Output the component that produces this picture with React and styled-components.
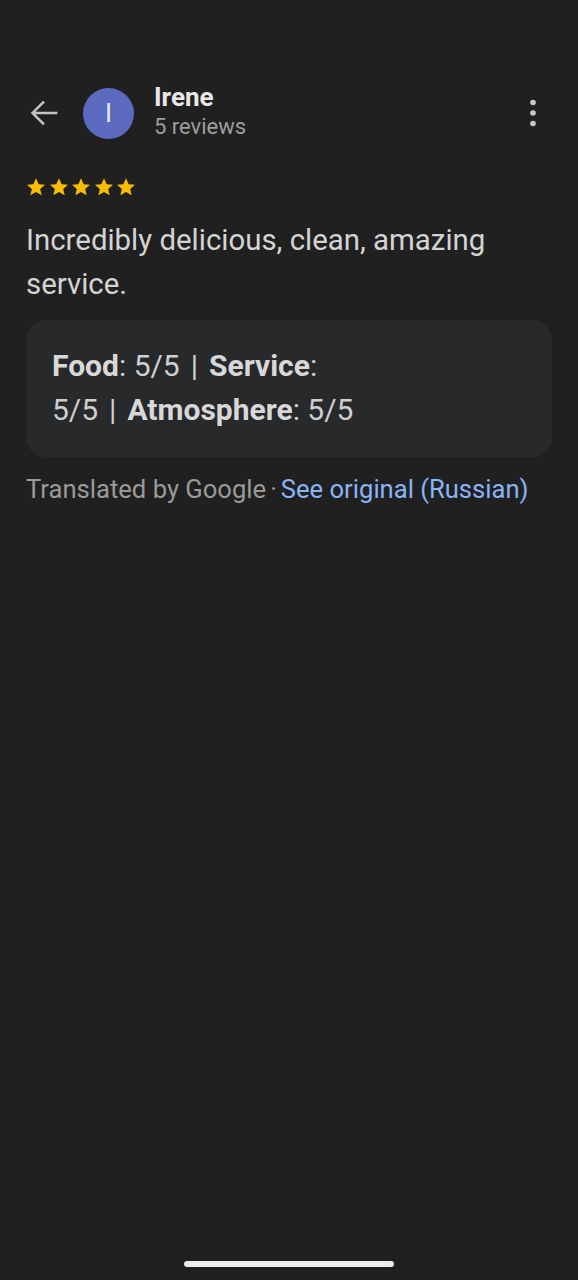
import React from 'react';
import styled, { createGlobalStyle } from 'styled-components';

const GlobalStyle = createGlobalStyle`
  html, body {
    margin: 0;
    background: #202020;
  }
  body {
    font-family: Roboto, "Noto Sans", sans-serif;
  }
`;

const Screen = styled.div`
  width: 578px;
  height: 1280px;
  background: #202020;
  display: flex;
  flex-direction: column;
  box-sizing: border-box;
  padding-top: 86px;
`;

const Header = styled.div`
  display: flex;
  align-items: center;
  padding: 0 35px 0 24px;
  height: 54px;
`;

const IconButton = styled.button`
  background: none;
  border: none;
  padding: 0;
  margin: 0;
  width: ${(p) => p.size || 40}px;
  height: 40px;
  display: flex;
  align-items: center;
  justify-content: center;
  cursor: pointer;
`;

const Avatar = styled.div`
  width: 51px;
  height: 51px;
  border-radius: 50%;
  background: #5c6bc0;
  color: #e8eaf6;
  display: flex;
  align-items: center;
  justify-content: center;
  font-size: 26px;
  margin-left: 19px;
`;

const Who = styled.div`
  display: flex;
  flex-direction: column;
  align-self: flex-start;
  margin: -2px 0 0 20px;
  flex: 1;
`;

const Name = styled.div`
  color: #e8e8e8;
  font-size: 26px;
  font-weight: 700;
  line-height: 26px;
`;

const Count = styled.div`
  color: #9e9e9e;
  font-size: 22px;
  line-height: 34px;
`;

const Body = styled.div`
  padding: 0 26px;
  display: flex;
  flex-direction: column;
`;

const Stars = styled.div`
  display: flex;
  gap: 2.5px;
  margin-top: 37px;
`;

const ReviewText = styled.p`
  margin: 21px 0 0;
  color: #d4d4d4;
  font-size: 29.4px;
  line-height: 44px;
`;

const Card = styled.div`
  margin-top: 14px;
  background: #28292b;
  border-radius: 20px;
  padding: 24px 26px 25px;
  color: #cfcfcf;
  font-size: 30px;
  line-height: 44px;
  b {
    font-weight: 700;
    color: #d8d8d8;
  }
`;

const Sep = styled.span`
  margin: 0 11px;
`;

const Footer = styled.div`
  margin-top: 14px;
  font-size: 25.6px;
  line-height: 36px;
  color: #9a9a9a;
  white-space: nowrap;
`;

const Dot = styled.span`
  margin: 0 4px;
`;

const Link = styled.a`
  color: #8ab4f8;
  text-decoration: none;
`;

const Spacer = styled.div`
  flex: 1;
`;

const HomeBar = styled.div`
  align-self: center;
  width: 210px;
  height: 6px;
  border-radius: 3px;
  background: #ececec;
  margin-bottom: 13px;
`;

function Star() {
  return (
    <svg width="20" height="20" viewBox="0 0 24 24">
      <path
        fill="#fbbc04"
        d="M12 1.5l3.2 7.1 7.6.7-5.8 5.1 1.8 7.6L12 18l-6.8 4 1.8-7.6-5.8-5.1 7.6-.7z"
      />
    </svg>
  );
}

export default function App() {
  return (
    <>
      <GlobalStyle />
      <Screen>
        <Header>
          <IconButton size={40}>
            <svg width="40" height="40" viewBox="0 0 24 24">
              <path
                fill="#c4c4c4"
                d="M20 11.25H6.9l5.6-5.6L11.45 4.6 4.05 12l7.4 7.4 1.05-1.05-5.6-5.6H20z"
              />
            </svg>
          </IconButton>
          <Avatar>I</Avatar>
          <Who>
            <Name>Irene</Name>
            <Count>5 reviews</Count>
          </Who>
          <IconButton size={20}>
            <svg width="8" height="28" viewBox="0 0 8 28">
              <circle cx="4" cy="3.5" r="2.8" fill="#c8c8c8" />
              <circle cx="4" cy="14" r="2.8" fill="#c8c8c8" />
              <circle cx="4" cy="24.5" r="2.8" fill="#c8c8c8" />
            </svg>
          </IconButton>
        </Header>
        <Body>
          <Stars>
            {[0, 1, 2, 3, 4].map((i) => (
              <Star key={i} />
            ))}
          </Stars>
          <ReviewText>Incredibly delicious, clean, amazing service.</ReviewText>
          <Card>
            <b>Food</b>: 5/5<Sep>|</Sep><b>Service</b>: 5/5<Sep>|</Sep>
            <b>Atmosphere</b>: 5/5
          </Card>
          <Footer>
            Translated by Google<Dot>·</Dot>
            <Link href="#">See original (Russian)</Link>
          </Footer>
        </Body>
        <Spacer />
        <HomeBar />
      </Screen>
    </>
  );
}
